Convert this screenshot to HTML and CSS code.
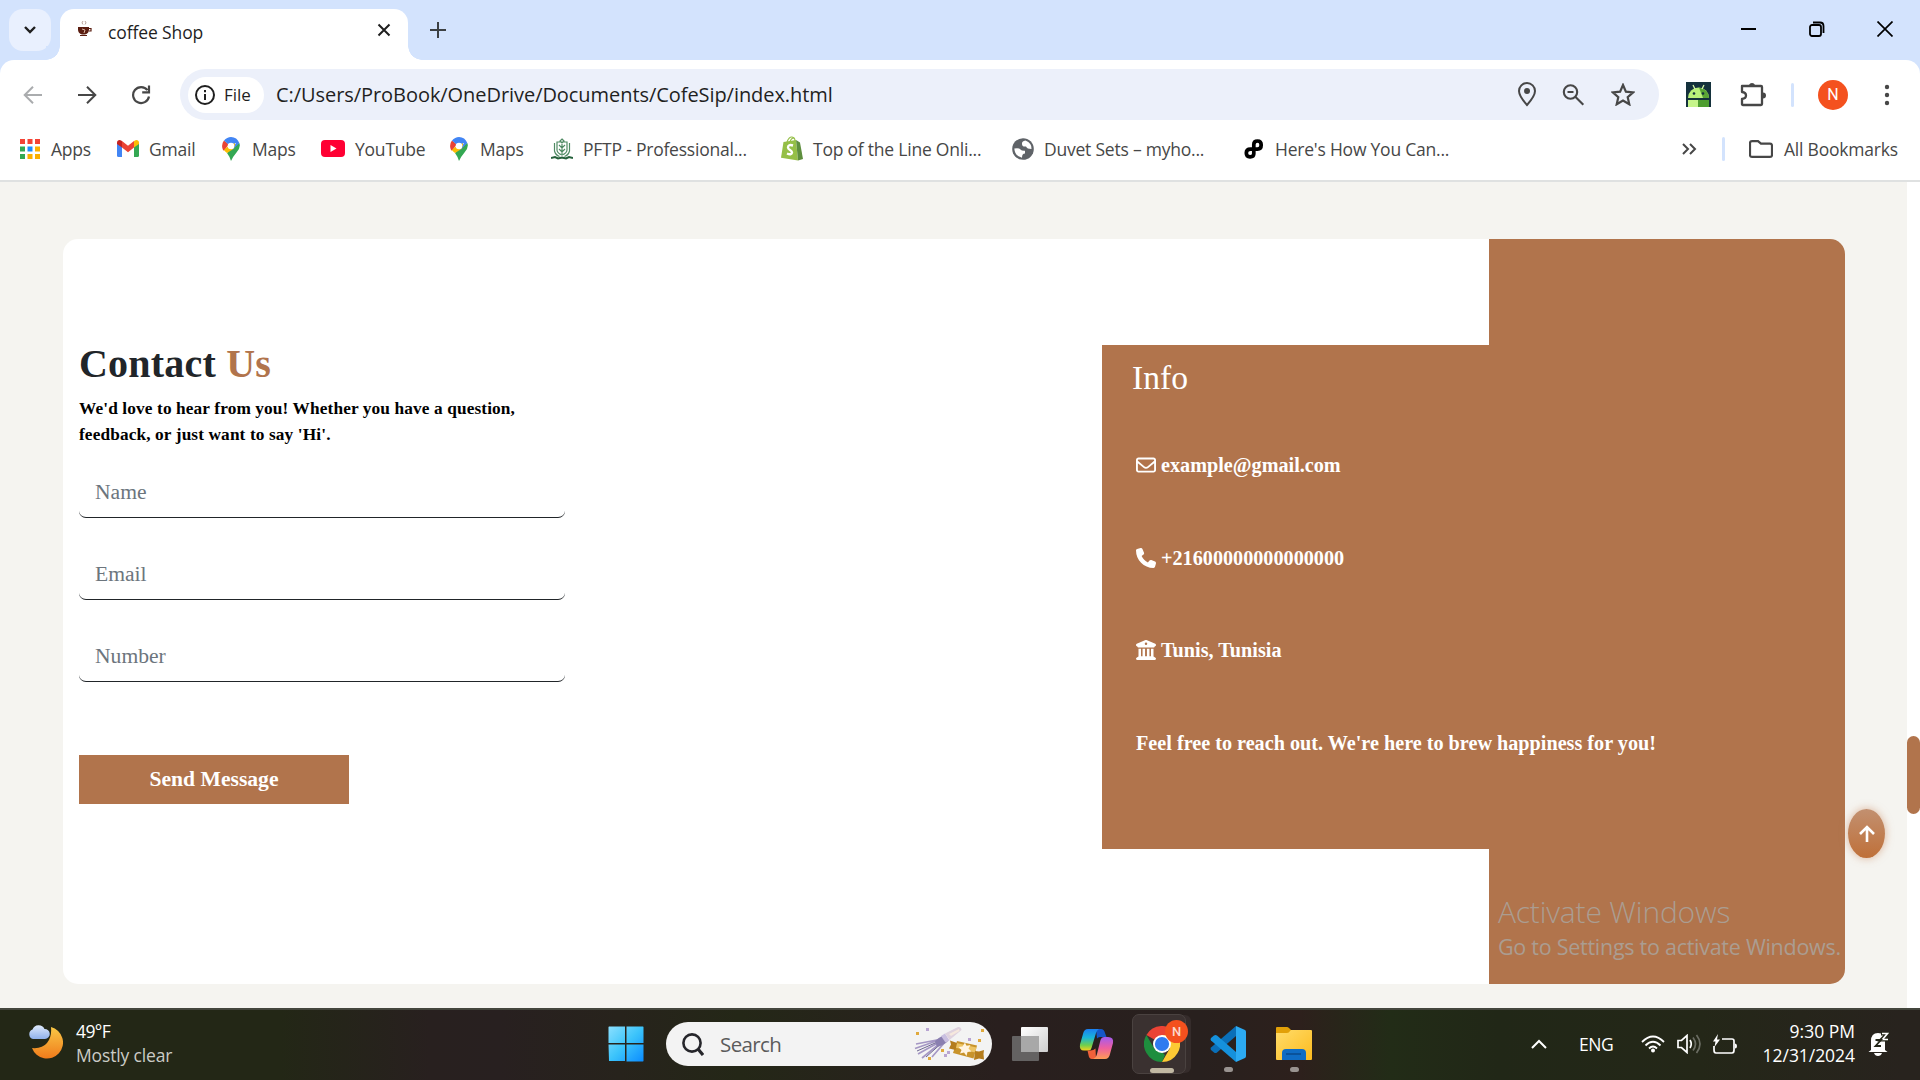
FILE: index.html
```html
<!DOCTYPE html>
<html lang="en">
<head>
<meta charset="utf-8">
<title>coffee Shop</title>
<link rel="stylesheet" href="styles.css">
</head>
<body>
<div class="screen">
  <header class="tabstrip">
    <div class="tabsearch"><svg width="14" height="10" viewBox="0 0 14 10"><path d="M2 2l5 5 5-5" fill="none" stroke="#1f1f1f" stroke-width="2.4"/></svg></div>
    <div class="tab">
      <svg class="favicon" width="15" height="18" viewBox="0 0 15 18"><path d="M6 0q-2 2 0 3.500M8 0q2 2 0 3.500" fill="none" stroke="#b9a49a"/><path d="M1 6h11v2.500q0 4-4 5H5Q1 12.500 1 8.500z" fill="#5a1d10"/><path d="M12 7.500h2v2.500h-2M3 14.500h7" fill="none" stroke="#5a1d10" stroke-width="1.200"/><path d="M5 8l3 1-1 3" fill="none" stroke="#d8b6a4"/></svg>
      <span class="ui tab-title">coffee Shop</span>
      <svg class="tab-close" width="14" height="14" viewBox="0 0 14 14"><path d="M1.500 1.500l11 11M12.500 1.500l-11 11" stroke="#1f1f1f" stroke-width="2"/></svg>
    </div>
    <svg class="newtab" width="16" height="16" viewBox="0 0 16 16"><path d="M8 0v16M0 8h16" stroke="#3c4043" stroke-width="2"/></svg>
    <div class="winctl">
      <svg width="16" height="16" viewBox="0 0 16 16"><path d="M0 8h15" stroke="#000" stroke-width="2"/></svg>
      <svg width="16" height="16" viewBox="0 0 16 16" fill="none" stroke="#000" stroke-width="1.800"><rect x="1" y="4" width="11" height="11" rx="2"/><path d="M4 1.500h7q3.500 0 3.500 3.500v7"/></svg>
      <svg width="16" height="16" viewBox="0 0 16 16"><path d="M.5.5l15 15M15.500.5l-15 15" stroke="#000" stroke-width="1.700"/></svg>
    </div>
  </header>

  <div class="toolbar">
    <nav class="navbtns">
      <svg width="20" height="20" viewBox="0 0 20 20" fill="none" stroke="#aaacae" stroke-width="2"><path d="M19 10H2.500M10 1.700L1.700 10l8.300 8.300"/></svg>
      <svg width="20" height="20" viewBox="0 0 20 20" fill="none" stroke="#474747" stroke-width="2"><path d="M1 10h16.500M10 1.700l8.300 8.300-8.300 8.300"/></svg>
      <svg width="20" height="20" viewBox="0 0 20 20" fill="none" stroke="#474747" stroke-width="2.200"><path d="M16.500 5.200A8 8 0 1 0 18 11.500M18 .5v6.800h-6.800"/></svg>
    </nav>
    <div class="omnibox">
      <div class="chip"><svg width="22" height="22" viewBox="0 0 22 22" fill="none" stroke="#1f1f1f" stroke-width="2"><circle cx="11" cy="11" r="9"/><path d="M11 10v6M11 6v2.200"/></svg><span class="ui chip-text">File</span></div>
      <span class="ui url">C:/Users/ProBook/OneDrive/Documents/CofeSip/index.html</span>
      <div class="omni-icons">
        <svg width="18" height="25" viewBox="0 0 18 25" fill="none" stroke="#474747" stroke-width="2"><path d="M9 23Q1 14 1 9a8 8 0 0 1 16 0q0 5-8 14z"/><circle cx="9" cy="9" r="3" fill="#474747" stroke="none"/></svg>
        <svg width="23" height="22" viewBox="0 0 23 22" fill="none" stroke="#474747" stroke-width="2.100"><circle cx="8.500" cy="8" r="6.700"/><path d="M13.300 12.800l8 8M5.500 8h6"/></svg>
        <svg width="24" height="23" viewBox="0 0 24 23" fill="none" stroke="#474747" stroke-width="2.200"><path d="M12 2l2.900 6.700 7.300.7-5.500 4.800 1.600 7.100L12 17.600l-6.300 3.700 1.600-7.100-5.500-4.800 7.300-.7z"/></svg>
      </div>
    </div>
    <div class="extensions">
      <svg width="25" height="25" viewBox="0 0 25 25"><path fill="#14313c" d="M0 0h25v25H0z"/><path d="M2 16a10.500 10.500 0 0 1 21 0z" fill="#b9f07a"/><path d="M13 5.500A10.500 10.500 0 0 1 23 16h-6z" fill="#5aa635"/><path d="M7 3l2 4M18 3l-2 4" stroke="#d6f7a8" stroke-width="1.300"/><circle cx="8" cy="11.500" r="1.300" fill="#14313c"/><circle cx="17" cy="11.500" r="1.300" fill="#14313c"/><path fill="#c6f58b" d="M2 18h10v7H2z"/><path fill="#4e9e30" d="M12 18h11v7H12z"/></svg>
      <svg width="26" height="26" viewBox="0 0 26 26" fill="none" stroke="#474747" stroke-width="2.300"><path d="M2 5h19q1 0 1 1v17q0 1-1 1H3q-1 0-1-1v-5q4-.5 4-3.500t-4-3.500z" stroke-linejoin="round"/><path d="M9 4a3.200 3.200 0 0 1 6 0zM23 11.500a3 3 0 0 1 0 6z" fill="#474747" stroke="none"/></svg>
      <i class="divider"></i>
      <span class="avatar">N</span>
      <svg width="6" height="22" viewBox="0 0 6 22" fill="#474747"><circle cx="3" cy="3" r="2.200"/><circle cx="3" cy="11" r="2.200"/><circle cx="3" cy="19" r="2.200"/></svg>
    </div>
  </div>

  <div class="bookmarks">
    <div class="bm"><svg width="20" height="20" viewBox="0 0 20 20"><path fill="#f44336" d="M0 0h5v5H0zM7.500 0h5v5h-5zM15 0h5v5h-5z"/><path fill="#34a853" d="M0 7.500h5v5H0zM0 15h5v5H0z"/><path fill="#1a8cff" d="M7.500 7.500h5v5h-5z"/><path fill="#fbb000" d="M15 7.500h5v5h-5zM7.500 15h5v5h-5zM15 15h5v5h-5z"/></svg><span class="ui bt apps-text">Apps</span></div>
    <div class="bm"><svg width="22" height="17" viewBox="0 0 22 17"><path fill="#4285f4" d="M0 3l5 3.500V17H1.500Q0 17 0 15.500z"/><path fill="#34a853" d="M22 3l-5 3.500V17h3.500q1.500 0 1.500-1.500z"/><path fill="#ea4335" d="M5 1l6 4.700L17 1v6.500l-6 4.700-6-4.700z"/><path fill="#c5221f" d="M0 2.500C0 .3 2.500-.6 4.200.6L5 1.200v6.300L0 4z"/><path fill="#fbbc04" d="M22 2.500C22 .3 19.500-.6 17.800.6L17 1.200v6.300L22 4z"/></svg><span class="ui bt">Gmail</span></div>
    <div class="bm maps"><svg width="18" height="24" viewBox="0 0 18 24"><use href="#gmap"/></svg><span class="ui bt">Maps</span></div>
    <div class="bm"><svg width="24" height="17" viewBox="0 0 24 17"><rect width="24" height="17" rx="4" fill="#ff0033"/><path d="M9.500 5l6 3.500-6 3.500z" fill="#fff"/></svg><span class="ui bt">YouTube</span></div>
    <div class="bm maps"><svg width="18" height="24" viewBox="0 0 18 24"><g id="gmap"><path d="M9 24Q8 20 5 16l9-9 3.300-1Q19 11 14.500 15.500 11 19.500 9 24z" fill="#34a853"/><path d="M1.500 12.500L12.500 5l1.300 5.500L5 16Q2.500 14 1.500 12.500z" fill="#fbbc04"/><path d="M2 3.500l5 4-5.700 6.300Q-1.500 8 2 3.500z" fill="#ea4335"/><path d="M2 3.500Q5 0 9 0q6 0 8.300 6L10.500 13 14 6 7 8z" fill="#4285f4"/><path d="M11 19l4-6.500 2.800-5-5.300 3z" fill="#34a853"/><circle cx="9" cy="9" r="3.300" fill="#fff"/></g></svg><span class="ui bt">Maps</span></div>
    <div class="bm"><svg width="22" height="22" viewBox="0 0 22 22" fill="none" stroke="#4f8a63" stroke-width="1.200"><path d="M11 1l2 2-2 2-2-2zM6 4h10v8q0 3-5 5-5-2-5-5zM3.500 5v8q1 4 5 5.500M18.500 5v8q-1 4-5 5.500M8 7l3 3 3-3M8 11l3 3 3-3M11 6v10"/><path d="M0 20l4-1 3 1.500 4-1 4 1 3-1.500 4 1" stroke="#24603a" stroke-width="2"/></svg><span class="ui bt">PFTP - Professional...</span></div>
    <div class="bm"><svg width="22" height="25" viewBox="0 0 22 25"><path d="M2.500 6L15 4l2 20.500L0 21.700z" fill="#95bf47"/><path d="M15 4l4 2.500 3 16.500-5 1.500z" fill="#5e8e3e"/><path d="M6 6Q8 .7 11 1t3 4M9 6q1-4 4-4" fill="none" stroke="#95bf47" stroke-width="1.200"/><path d="M12 9.500Q7 8 7 11.500c0 2.500 4 2.500 4 5Q10.500 19.500 6 17.500" fill="none" stroke="#fff" stroke-width="2.400"/></svg><span class="ui bt">Top of the Line Onli...</span></div>
    <div class="bm"><svg width="22" height="22" viewBox="0 0 22 22"><circle cx="11" cy="11" r="10.800" fill="#5f6368"/><path d="M2.300 10.500Q7 9.500 8.500 11.500q1 1.500 4.500 1.300v2.700q-3 0-3 4.200-7-1.200-7.700-9.200z" fill="#fff"/><path d="M13.500 2.500q-4 .5-3.500 3.500 0 3 4 2.500 1 2.500 5.500 2.500.5-6-6-8.500z" fill="#fff"/></svg><span class="ui bt">Duvet Sets – myho...</span></div>
    <div class="bm"><svg width="20" height="20" viewBox="0 0 20 20" fill="none" stroke="#000" stroke-width="3.700"><path d="M9.800 15.500V5.500q0-3.500 3.700-3.500t3.700 4-3.700 4.200h-7q-4.200 0-4.200 3.800t3.700 3.900 3.800-3.400"/></svg><span class="ui bt here-text">Here's How You Can...</span></div>
    <svg class="more" width="15" height="12" viewBox="0 0 15 12" fill="none" stroke="#474747" stroke-width="2"><path d="M1 1l5 5-5 5M8 1l5 5-5 5"/></svg>
    <i class="divider"></i>
    <div class="bm"><svg width="24" height="18" viewBox="0 0 24 18" fill="none" stroke="#474747" stroke-width="2.200"><path d="M3 1.100h6l3 2.600h9q2 0 2 2v9.200q0 2-2 2H3q-2 0-2-2V3.100q0-2 2-2z"/></svg><span class="ui bt all-text">All Bookmarks</span></div>
  </div>

  <div class="viewport">
    <main class="page">
      <section class="card">
        <form class="contact">
          <h1>Contact <b>Us</b></h1>
          <p class="lead">We'd love to hear from you! Whether you have a question,<br>feedback, or just want to say 'Hi'.</p>
          <input class="field" type="text" placeholder="Name">
          <input class="field" type="text" placeholder="Email">
          <input class="field" type="text" placeholder="Number">
          <button class="send" type="button">Send Message</button>
        </form>
        <div class="info">
          <h2>Info</h2>
          <p><svg width="20" height="20" viewBox="0 0 512 512"><path d="M64 112c-8.800 0-16 7.200-16 16v22.100L220.500 291.700c20.700 17 50.400 17 71.100 0L464 150.100V128c0-8.800-7.200-16-16-16H64zM48 212.200V384c0 8.800 7.200 16 16 16H448c8.800 0 16-7.200 16-16V212.200L322 328.800c-38.400 31.500-93.700 31.500-132 0L48 212.200zM0 128C0 92.700 28.700 64 64 64H448c35.300 0 64 28.700 64 64V384c0 35.300-28.700 64-64 64H64c-35.300 0-64-28.700-64-64V128z"/></svg>example@gmail.com</p>
          <p><svg width="20" height="20" viewBox="0 0 512 512"><path d="M164.900 24.600c-7.700-18.600-28-28.500-47.400-23.200l-88 24C12.100 30.200 0 46 0 64C0 311.400 200.600 512 448 512c18 0 33.800-12.100 38.600-29.500l24-88c5.300-19.400-4.600-39.700-23.200-47.400l-96-40c-16.300-6.800-35.200-2.100-46.300 11.600L304.700 368C234.300 334.700 177.300 277.700 144 207.300L193.300 167c13.700-11.200 18.400-30 11.600-46.300l-40-96z"/></svg>+21600000000000000</p>
          <p><svg width="20" height="20" viewBox="0 0 512 512"><path d="M243.400 2.600l-224 96c-14 6-21.800 21-18.700 35.800S16.800 160 32 160v8c0 13.300 10.700 24 24 24H456c13.300 0 24-10.700 24-24v-8c15.200 0 28.300-10.700 31.300-25.600s-4.800-29.900-18.700-35.800l-224-96c-8-3.400-17.200-3.400-25.200 0zM128 224H64V420.300c-.6 .3-1.200 .7-1.800 1.100l-48 32c-11.700 7.800-17 22.400-12.900 35.900S17.900 512 32 512H480c14.100 0 26.500-9.200 30.600-22.700s-1.100-28.100-12.900-35.900l-48-32c-.6-.4-1.200-.7-1.800-1.100V224H384V416H344V224H280V416H232V224H168V416H128V224zM256 64a32 32 0 1 1 0 64 32 32 0 1 1 0-64z"/></svg>Tunis, Tunisia</p>
          <p>Feel free to reach out. We're here to brew happiness for you!</p>
        </div>
      </section>
      <div class="totop"><svg width="16" height="17" viewBox="0 0 16 17" fill="none" stroke="#fff" stroke-width="2.600"><path d="M8 17V2M1 9l7-7 7 7"/></svg></div>
      <div class="watermark"><span class="ui wm1">Activate Windows</span><span class="ui wm2">Go to Settings to activate Windows.</span></div>
    </main>
    <div class="scroll"><i></i></div>
  </div>

  <footer class="taskbar">
    <div class="weather">
      <svg width="35" height="34" viewBox="0 0 35 34"><defs><linearGradient id="mo" x2="0" y2="1"><stop stop-color="#f9c846"/><stop offset="1" stop-color="#f07b1b"/></linearGradient><linearGradient id="cl" x2="0" y2="1"><stop stop-color="#dfeafc"/><stop offset="1" stop-color="#8fb0ea"/></linearGradient></defs><path d="M23 2a16 16 0 1 1-19 21Q14 24 19 18T23 2z" fill="url(#mo)"/><path d="M5 14a5 5 0 0 1-.5-9.500 6.500 6.500 0 0 1 12-.5A5 5 0 0 1 17 14z" fill="url(#cl)"/></svg>
      <div class="wtext"><span class="ui w1">49°F</span><span class="ui w2">Mostly clear</span></div>
    </div>
    <div class="apps">
      <svg class="start" width="36" height="36" viewBox="0 0 36 36"><defs><linearGradient id="wi" x2="1" y2="1"><stop stop-color="#8be0ff"/><stop offset=".5" stop-color="#3cc4fb"/><stop offset="1" stop-color="#0b8cff"/></linearGradient></defs><path fill="url(#wi)" d="M1 .5h16v16.500H.5V1zM18.500.5H35l.5.5v16h-17zM.5 18.500H17V35H1zM18.500 18.500h17V35l-.5.5H18.500z"/></svg>
      <div class="search">
        <svg width="22" height="23" viewBox="0 0 22 23" fill="none" stroke="#26262b" stroke-width="2.600"><circle cx="10" cy="10" r="8.600"/><path d="M16 16l5 6" stroke-width="3.200"/></svg>
        <span class="ui stext">Search</span>
        <svg class="party" width="72" height="36" viewBox="0 0 72 36"><path d="M28 13L2 18M28 13L1 22.500M29 14L4 28M29 15L8 32M31 16l-13 15" stroke="#a597c4" stroke-width="1.700"/><path d="M28 14L3 25M30 15L12 31" stroke="#6d6690" stroke-width="1"/><path d="M21 15q3-3 9-6l4 6q-4 4-11 6z" fill="#8a7fb0"/><path d="M27 10l4-2.500 4.500 7-4 2z" fill="#c9bfe0"/><path d="M31 7.500L44 1q3-.5 3.500 3L35.500 14z" fill="#dfd2de"/><path d="M35 8l10-5 .5 2L37 10z" fill="#f6e8dd"/><path d="M43 15l20 4.500-3.500 13L39 27z" fill="#c8932b"/><path d="M42.500 17l20 4.500-1.500 5-20-5z" fill="#edc465"/><path d="M43 17l-7-2.500 1 4-2 4 6.500 1.500zM61 25l4 .5 5-1.500-.5 4 .5 5.500-5-1-5 1.500z" fill="#b57d1d"/><path d="M51 16.500l1.500 3.500 4-1-2 3.500 3 3-4 .5-1 4-2.500-3.500-4 1 1.500-3.500-3-3 4-.5z" fill="#fff4e2"/><path fill="#e0a93c" d="M2 6h3v3H2zM14 31h3v3h-3zM27 23h3v3h-3zM64 13h3v3h-3zM67 3h3v3h-3z"/><path fill="#b9a5d2" d="M12 2h3v3h-3zM54 12h3v3h-3zM33 25h3v3h-3zM30 28h3v3h-3z"/></svg>
      </div>
      <svg class="tview" width="37" height="34" viewBox="0 0 37 34"><defs><linearGradient id="tv" x2="1" y2="1"><stop stop-color="#fff"/><stop offset="1" stop-color="#cfcfcf"/></linearGradient></defs><rect x="9" width="27" height="25" rx="1" fill="url(#tv)"/><rect y="9" width="27" height="25" rx="1" fill="#6f6f6f" fill-opacity=".85"/><path d="M9 9h18v16H9z" fill="#a8a8a8"/></svg>
      <svg class="copilot" width="35" height="32" viewBox="0 0 35 32"><defs><linearGradient id="c1" x2="0" y2="1"><stop stop-color="#1b7ff2"/><stop offset=".4" stop-color="#19b5d8"/><stop offset=".75" stop-color="#6fcf4e"/><stop offset="1" stop-color="#f5d21c"/></linearGradient><linearGradient id="c2" x2="0" y2="1"><stop stop-color="#a35bf0"/><stop offset=".5" stop-color="#ee5fa0"/><stop offset="1" stop-color="#ff9b54"/></linearGradient></defs><path d="M17 1h5q3 0 4 4l1.500 4H21q-2 0-3 1.500z" fill="#1557c8"/><path d="M9 1h11q-2 1-3 4l-4.500 15q-.5 2.500-3 2.500H5q-5 0-4-6L4 6q1-5 5-5z" fill="url(#c1)"/><path d="M17 31h-4q-3 0-3.500-4L8.500 22.500h3q3 0 5-2z" fill="#f0603a"/><path d="M26 31H14q3-1 4-5L21.500 12q1-3 4-3H29q6 0 5 6l-3 11q-1 5-5 5z" fill="url(#c2)"/></svg>
      <div class="tile">
        <svg width="36" height="36" viewBox="0 0 36 36"><path d="M18 18L2.400 9A18 18 0 0 1 33.600 9z" fill="#ea4335"/><path d="M18 36A18 18 0 0 1 2.400 9l7.800 13.500L18 26l3 3z" fill="#1e8e3e"/><path d="M33.600 9H18l7.800 13.500L18 36A18 18 0 0 0 33.600 9z" fill="#fcc934"/><circle cx="18" cy="18" r="9" fill="#fff"/><circle cx="18" cy="18" r="7.100" fill="#2f7bf0"/></svg>
        <span class="badge">N</span><i class="run on"></i>
      </div>
      <div class="app"><svg width="36" height="36" viewBox="0 0 36 36"><path d="M26 0v10L7 26.500q-1.500 1-3 0L1 24q-1-1.300 0-2.500z" fill="#0a6fb8"/><path d="M26 36V26L7 9.500q-1.500-1-3 0L1 12q-1 1.300 0 2.500z" fill="#1591dc"/><path d="M26 0l9 4q1 .5 1 2v24q0 1.500-1 2l-9 4z" fill="#2caaf2"/></svg><i class="run"></i></div>
      <div class="app"><svg width="36" height="34" viewBox="0 0 36 34"><defs><linearGradient id="fo" x2="1" y2="1"><stop stop-color="#ffdc6a"/><stop offset="1" stop-color="#fdbb1e"/></linearGradient></defs><path d="M0 1q0-1 1-1h10q1 0 2 1l3 3v5H0z" fill="#e2a008"/><path d="M0 6h11q2 0 3-2l1-1h20q1 0 1 1v28q0 1-1 1H1q-1 0-1-1z" fill="url(#fo)"/><path d="M6 33v-7q0-4 4-4h16q4 0 4 4v7z" fill="#0f6cc4"/><path d="M10 27h15" stroke="#0a4a8c" stroke-width="1.500"/></svg><i class="run"></i></div>
    </div>
    <div class="tray">
      <svg class="up" width="16" height="10" viewBox="0 0 16 10"><path d="M1 9l7-7 7 7" fill="none" stroke="#fff" stroke-width="2"/></svg>
      <span class="ui eng">ENG</span>
      <svg class="wifi" width="24" height="18" viewBox="0 0 24 18" fill="none" stroke="#fff" stroke-width="1.800"><path d="M1 7q11-11 22 0M4.500 10.500q7.500-7.500 15 0M8 13.500q4-4 8 0"/><circle cx="12" cy="15.500" r="2" fill="#fff" stroke="none"/></svg>
      <svg class="vol" width="25" height="20" viewBox="0 0 25 20" fill="none" stroke="#fff" stroke-width="1.700"><path d="M1 6.500h3.500L10 1.500v17l-5.500-5H1zM13 6q2.500 4 0 8"/><path d="M16 3.500q5 6.500 0 13M19.500 1q7 9 0 18" stroke="#6b6d63"/></svg>
      <svg class="bat" width="24" height="20" viewBox="0 0 24 20"><path d="M9 5h10q2 0 2 2v9q0 3-2 3H3q-2 0-2-3v-4" fill="none" stroke="#fff" stroke-width="1.700"/><path d="M22 9.500q2 0 2 2.500t-2 2.500zM5 0L0 7.500h2.500L1.500 13 7 5.500H4z" fill="#fff"/></svg>
      <div class="clock"><span class="ui t1">9:30 PM</span><span class="ui t2">12/31/2024</span></div>
      <svg class="bell" width="22" height="24" viewBox="0 0 22 24"><path d="M3 18V9q0-8 7-8t7 8v9l2.500 2H.5zM6 21h8q-1 3-4 3t-4-3z" fill="#fff"/><path d="M13 1.500h7l-6 6h7" fill="none" stroke="#242619" stroke-width="4"/><path d="M14 1.500h5.500l-5 6H20" fill="none" stroke="#fff" stroke-width="1.600"/><path d="M7.500 8H13l-5.500 6H13" fill="none" stroke="#242619" stroke-width="1.800"/></svg>
    </div>
  </footer>
</div>
</body>
</html>
```
FILE: styles.css
```css
* { box-sizing: border-box; }
body { margin: 0; background: #d3e3fd; }
svg { display: block; flex: none; }
.screen { width: 1920px; height: 1080px; overflow: hidden; display: flex; flex-direction: column; }
.ui { font-family: "Open Sans", "Noto Sans", sans-serif; white-space: nowrap; }

/* tab strip */
.tabstrip { height: 60px; flex: none; display: flex; align-items: flex-start; padding: 9px 27px 0 9px; background: #d3e3fd; }
.tabsearch { width: 42px; height: 42px; border-radius: 14px; background: #e9f0fe; display: flex; align-items: center; justify-content: center; }
.tab { position: relative; width: 348px; height: 51px; margin-left: 9px; padding: 0 17px 9px 17px; border-radius: 14px 14px 0 0; background: #fff; display: flex; align-items: center; }
.tab::before, .tab::after { content: ""; position: absolute; bottom: 0; width: 14px; height: 14px; }
.tab::before { left: -14px; background: radial-gradient(circle at 0 0, #d3e3fd 13.5px, #fff 14px); }
.tab::after { right: -14px; background: radial-gradient(circle at 100% 0, #d3e3fd 13.5px, #fff 14px); }
.tab-title { margin-left: 16px; padding-top: 3px; font-size: 17.5px; letter-spacing: -.12px; color: #1f1f1f; }
.tab-close { margin-left: auto; }
.newtab { margin: 13px 0 0 22px; }
.winctl { margin: 12px 0 0 auto; display: flex; gap: 52px; }

/* address row */
.toolbar { height: 72px; flex: none; display: flex; align-items: center; padding: 0 30px 3px 23px; background: #fff; border-radius: 14px 14px 0 0; }
.navbtns { display: flex; gap: 34px; width: 157px; }
.omnibox { width: 1479px; height: 51px; border-radius: 26px; background: #ecf0fa; display: flex; align-items: center; padding: 0 24px 0 8px; }
.chip { width: 76px; height: 36px; border-radius: 18px; background: #fff; display: flex; align-items: center; gap: 8px; padding-left: 6px; }
.chip-text { font-size: 17px; font-weight: 500; color: #1f1f1f; }
.url { margin-left: 12px; font-size: 20px; letter-spacing: -.06px; color: #1f1f1f; }
.omni-icons { margin-left: auto; display: flex; align-items: center; gap: 26px; }
.extensions { flex: 1; display: flex; align-items: center; margin-left: 27px; }
.extensions svg:nth-of-type(2) { margin: -2px 0 0 29px; }
.extensions .divider { margin-left: 25px; }
.avatar { margin: 0 36px 0 24px; width: 30px; height: 30px; flex: none; border-radius: 50%; background: #f4511e; color: #fff; font: 16px/30px Roboto, sans-serif; text-align: center; }
.divider { width: 3px; height: 24px; flex: none; border-radius: 2px; background: #d3e3fd; }

/* bookmarks */
.bookmarks { height: 50px; flex: none; display: grid; align-items: center; grid-template-columns: 97px 105px 99px 129px 101px 230px 231px 232px 438px 40px 27px 1fr; padding: 0 0 15px 20px; background: #fff; border-bottom: 2px solid #dfe1e1; }
.bm { display: flex; align-items: center; gap: 10px; }
.bm.maps { gap: 12px; }
.bt { font-size: 17.5px; letter-spacing: -.22px; color: #474747; }
.apps-text, .all-text, .here-text { margin-left: 1px; }

/* page */
.viewport { flex: 1; display: flex; min-height: 0; background: #fff; }
.page { position: relative; width: 1907px; background: #f5f4f0; padding: 57px 62px 0 63px; }
.card { height: 745px; border-radius: 15px; background: linear-gradient(90deg, #fff 1426px, #b1744c 1426px); display: flex; justify-content: space-between; padding: 106px 0 0 16px; font-family: "Liberation Serif", serif; }
.contact { width: 486px; display: flex; flex-direction: column; }
.contact h1 { margin: -5px 0 0; font-size: 40px; line-height: 48px; letter-spacing: .2px; color: #212529; }
.contact h1 b { color: #b1744c; }
.lead { margin: 8px 0 20px; font-size: 17.3px; line-height: 26px; letter-spacing: .12px; font-weight: bold; color: #000; white-space: nowrap; }
.field { width: 486px; height: 50px; margin: 0 0 32px; padding: 0 16px; border: 0; border-bottom: 1px solid #212529; border-radius: 7px; background: #fff; font: 21.6px "Liberation Serif", serif; }
.field::placeholder { color: #6c757d; opacity: 1; }
.send { width: 270px; height: 49px; margin-top: 41px; border: 0; background: #b1744c; color: #fff; font: bold 21.6px "Liberation Serif", serif; }
.info { width: 743px; height: 504px; padding: 13px 0 0 30px; background: #b1744c; color: #fff; }
.info h2 { margin: 0 0 55px; font-size: 33.6px; line-height: 40px; font-weight: normal; }
.info p { height: 24px; margin: 0 0 68.5px 4px; display: flex; align-items: center; gap: 5px; font-size: 20.2px; line-height: 24px; font-weight: bold; }
.info svg { fill: #fff; }
.totop { position: absolute; right: 22px; top: 627px; width: 37px; height: 49px; border-radius: 50%; background: linear-gradient(#c29070, #bf7039); box-shadow: 0 0 8px #c9865c99; display: flex; align-items: center; justify-content: center; }
.watermark { position: absolute; left: 1498px; top: 709px; display: flex; flex-direction: column; color: #ab9d91; }
.wm1 { font-size: 30px; line-height: 42px; font-weight: 350; letter-spacing: -.2px; }
.wm2 { font-size: 21.5px; line-height: 28px; letter-spacing: -.27px; }
.scroll { width: 13px; padding-top: 554px; }
.scroll i { display: block; height: 78px; border-radius: 7px; background: #b1744c; }

/* taskbar */
.taskbar { height: 72px; flex: none; display: flex; border-top: 2px solid #44463d; background: linear-gradient(90deg, #232716 0, #232716 280px, #28201f 430px, #282020 500px, #27231c 620px, #242717 740px, #27231c 880px, #291f1e 1000px, #28201e 1200px, #2d201c 1300px, #222c17 1390px, #212717 1500px, #242718 1700px, #28231e 1900px); }
.weather { width: 608px; display: flex; padding: 15px 0 0 28px; gap: 13px; }
.wtext { display: flex; flex-direction: column; margin-top: -6px; }
.w1, .w2 { font-size: 17.5px; line-height: 24px; letter-spacing: -.15px; color: #fff; }
.w1 { letter-spacing: -.6px; }
.w2 { color: #cbccc6; }
.apps { width: 923px; display: flex; align-items: center; padding-bottom: 2px; }
.search { width: 326px; height: 44px; margin-left: 22px; border-radius: 22px; background: #f3f3f3; display: flex; align-items: center; padding: 0 6px 0 16px; }
.stext { margin-left: 16px; font-size: 20.5px; letter-spacing: -.6px; color: #5b5b5b; }
.party { margin-left: auto; }
.tview { margin-left: 20px; }
.copilot { margin-left: 30px; }
.tile { position: relative; width: 54px; height: 60px; margin-left: 18px; border-radius: 7px; border: 1px solid #4a4240; background: #3a3130; box-shadow: 6px 0 0 -1px #352c2b; padding: 11px 0 0 11px; }
.badge { position: absolute; left: 32px; top: 5px; width: 23px; height: 23px; border-radius: 50%; background: #f4511e; color: #fbd9cc; font: 500 13px/23px Roboto, sans-serif; text-align: center; }
.run { position: absolute; bottom: -10px; left: 14px; width: 9px; height: 5px; border-radius: 3px; background: #999390; }
.run.on { bottom: 0; left: 17px; width: 24px; background: #c1b8a2; }
.app { position: relative; width: 36px; height: 36px; margin-left: 24px; display: flex; align-items: center; }
.app + .app { margin-left: 30px; }
.tray { flex: 1; display: flex; align-items: center; padding-bottom: 2px; }
.eng { margin-left: 32px; width: 62px; font-size: 17.5px; letter-spacing: -.4px; color: #fff; }
.vol { margin-left: 12px; }
.bat { margin-left: 11px; }
.clock { width: 118px; display: flex; flex-direction: column; align-items: flex-end; padding-bottom: 2px; }
.t1, .t2 { font-size: 17.5px; line-height: 24px; color: #fff; }
.t2 { letter-spacing: -.05px; }
.bell { margin-left: 13px; }
```
